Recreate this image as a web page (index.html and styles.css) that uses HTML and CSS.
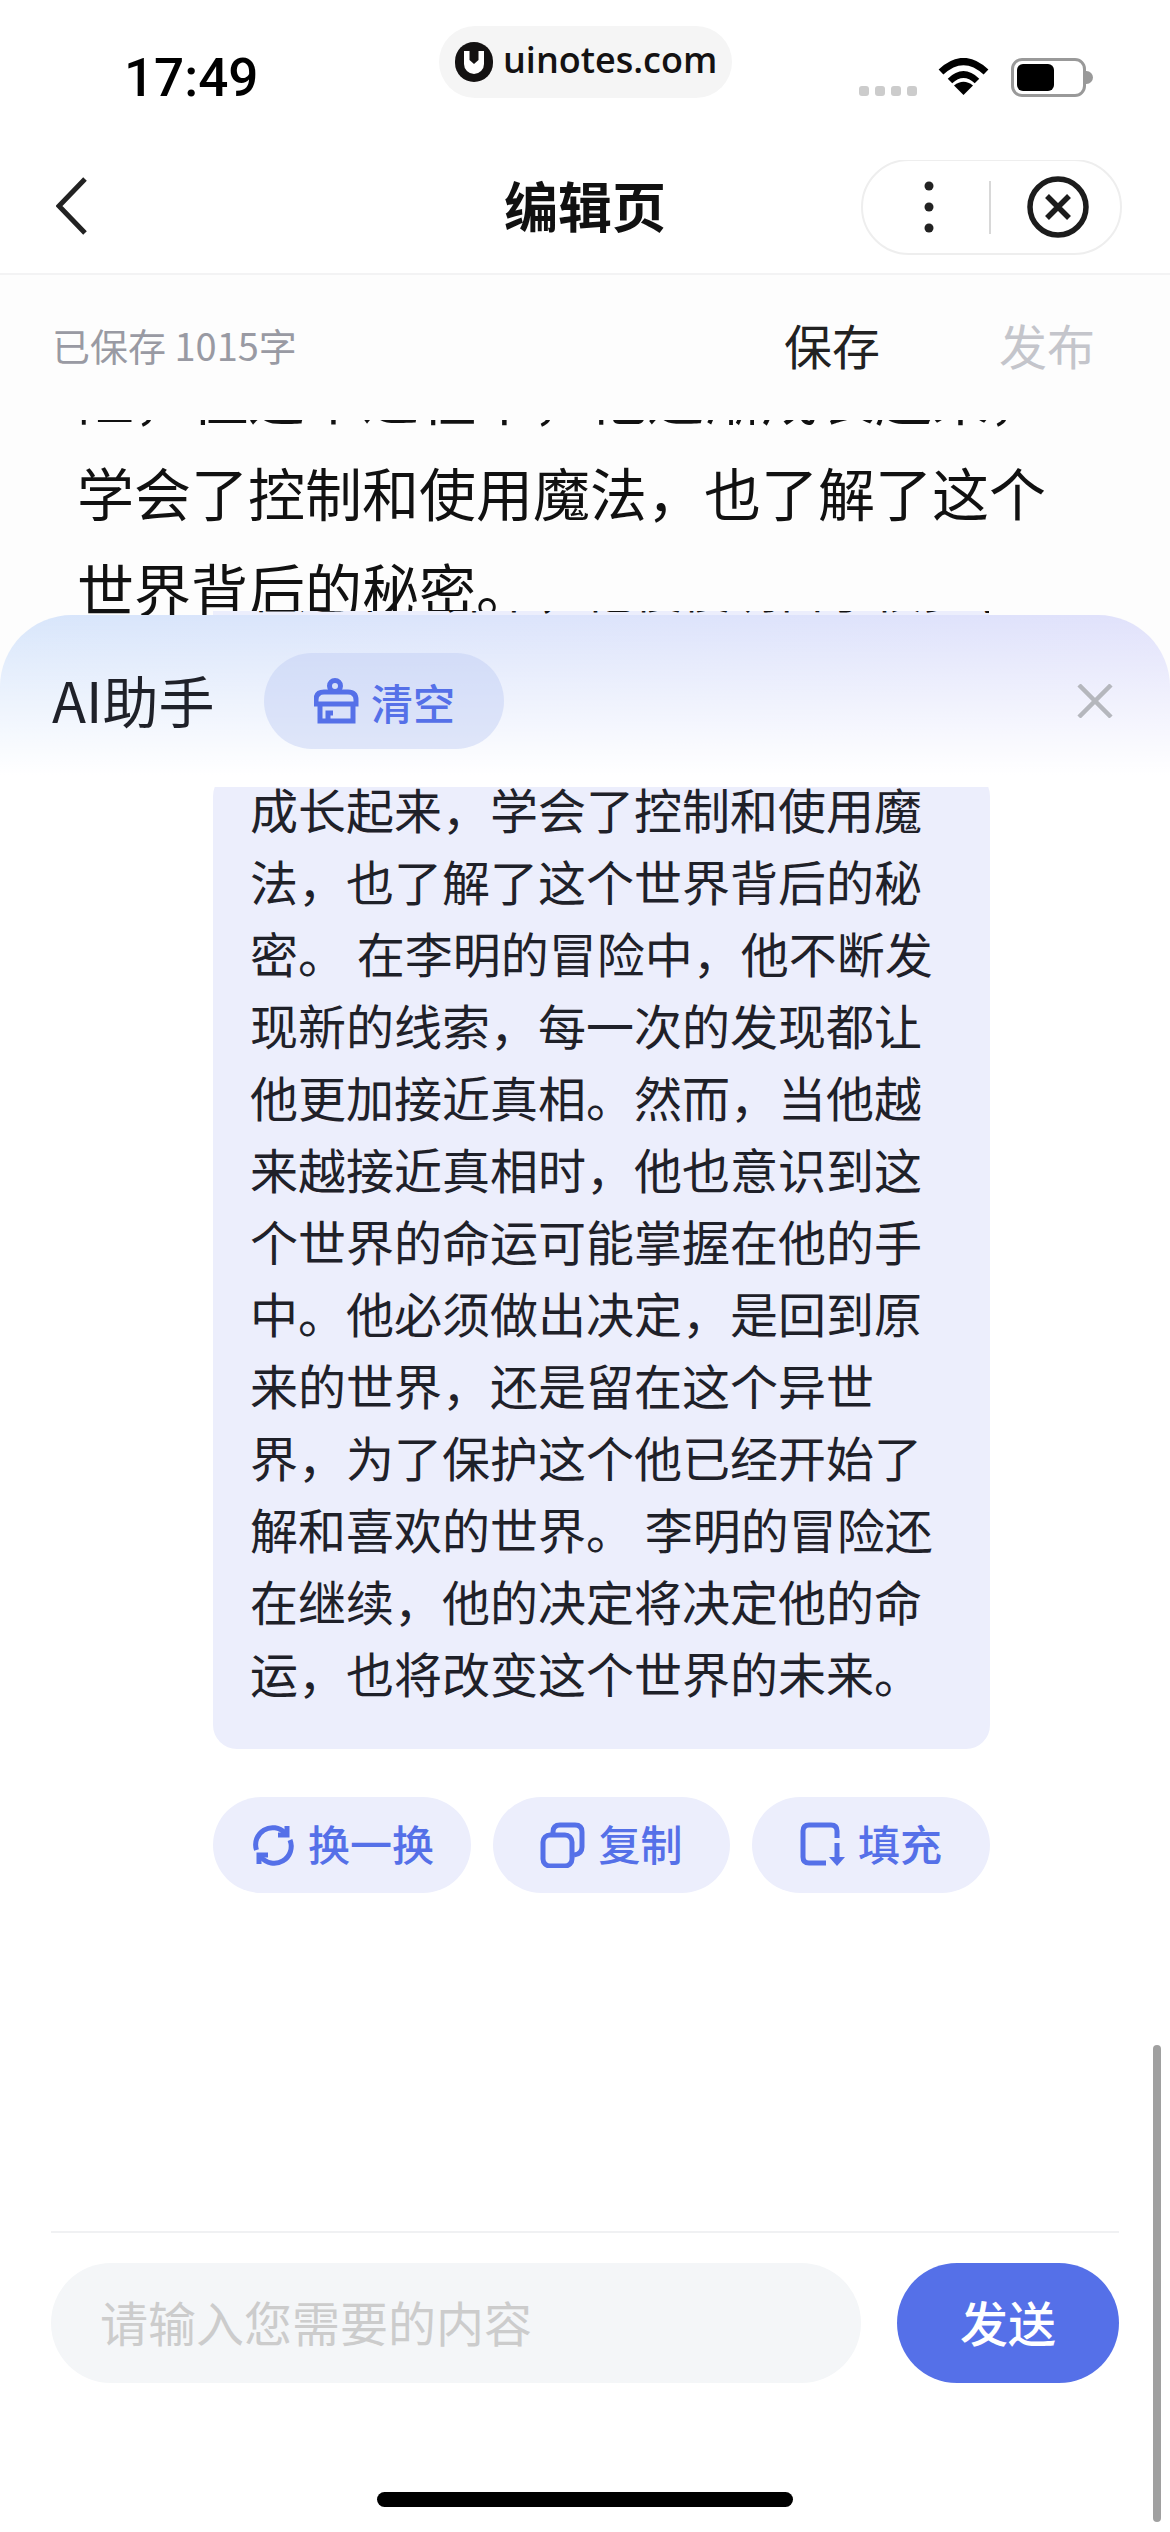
FILE: index.html
```html
<!DOCTYPE html>
<html lang="zh-CN">
<head>
    <meta charset="UTF-8">
    <meta name="viewport" content="width=device-width, initial-scale=1.0">
    <title>编辑页</title>
    <link rel="stylesheet" href="styles.css">
</head>
<body>

    <div class="status">
        <span class="time">17:49</span>
        <div class="pill">
            <svg class="logo" width="38" height="40" viewBox="0 0 38 40">
                <rect width="38" height="40" rx="19" fill="#141212"/>
                <path d="M9 9h20v13a10 10 0 0 1-20 0z" fill="#fff"/>
                <path d="M14.5 5h9v13l-4.500 4-4.500-4z" fill="#141212"/>
            </svg>
            <span class="site">uinotes.com</span>
        </div>
        <div class="indicators">
            <div class="cell"><i></i><i></i><i></i><i></i></div>
            <svg width="51" height="37" viewBox="0 0 51 37">
                <path d="M3 14Q25.500-7 48 14" fill="none" stroke="#000" stroke-width="7"/>
                <path d="M12 23Q25.500 10 39 23" fill="none" stroke="#000" stroke-width="6.500"/>
                <path d="M25.500 37L16 27.500Q25.500 20 35 27.500z"/>
            </svg>
            <div class="battery"><div class="battery-level"></div></div>
            <div class="battery-nub"></div>
        </div>
    </div>

    <nav class="nav">
        <svg class="back" width="32" height="58" viewBox="0 0 32 58">
            <path d="M29 2L3 29l26 27" fill="none" stroke="#222" stroke-width="5"/>
        </svg>
        <h1 class="title">编辑页</h1>
        <div class="capsule">
            <svg class="cap-menu" width="10" height="52" viewBox="0 0 10 52">
                <circle cx="5" cy="5" r="4.500" fill="#222"/>
                <circle cx="5" cy="26" r="4.500" fill="#222"/>
                <circle cx="5" cy="47" r="4.500" fill="#222"/>
            </svg>
            <div class="cap-line"></div>
            <svg class="cap-close" width="62" height="62" viewBox="0 0 62 62">
                <circle cx="31" cy="31" r="28" fill="none" stroke="#1c1c1c" stroke-width="5.500"/>
                <path d="M20 20l22 22M42 20L20 42" fill="none" stroke="#1c1c1c" stroke-width="5.500"/>
            </svg>
        </div>
    </nav>

    <div class="toolbar">
        <span class="saved">已保存 1015字</span>
        <span class="tool-save">保存</span>
        <span class="tool-publish">发布</span>
    </div>

    <div class="article">
        <p>险&#xFF0C;但这个过程中&#xFF0C;他逐渐成长起来&#xFF0C;学会了控制和使用魔法&#xFF0C;也了解了这个世界背后的秘密。</p>
        <div class="peek"><p>在这个世界中&#xFF0C;他慢慢明白了很多事情</p></div>
    </div>

    <div class="sheet">
        <div class="sheet-head">
            <span class="sheet-title">AI助手</span>
            <div class="chip">
                <svg width="46" height="46" viewBox="0 0 46 46" fill="none" stroke="#5570e8" stroke-width="5">
                    <circle cx="21" cy="8" r="5.500"/>
                    <path d="M2 26v-4q0-8 8-8h24q8 0 8 8v4z"/>
                    <path d="M6 26v17h33V26M14 43v-8h5"/>
                </svg>
                清空
            </div>
            <svg class="sheet-close" width="36" height="34" viewBox="0 0 36 34">
                <path d="M2 1l32 32M34 1L2 33" fill="none" stroke="#b5b7bd" stroke-width="4.500"/>
            </svg>
        </div>

        <div class="chat">
            <div class="bubble">成长起来&#xFF0C;学会了控制和使用魔法&#xFF0C;也了解了这个世界背后的秘密。 在李明的冒险中&#xFF0C;他不断发现新的线索&#xFF0C;每一次的发现都让他更加接近真相。然而&#xFF0C;当他越来越接近真相时&#xFF0C;他也意识到这个世界的命运可能掌握在他的手中。他必须做出决定&#xFF0C;是回到原来的世界&#xFF0C;还是留在这个异世界&#xFF0C;为了保护这个他已经开始了解和喜欢的世界。 李明的冒险还在继续&#xFF0C;他的决定将决定他的命运&#xFF0C;也将改变这个世界的未来。</div>
            <div class="actions">
                <div class="action">
                    <svg width="46" height="46" viewBox="-3 -3 46 46" fill="none" stroke="#5570e8" stroke-width="5">
                        <path d="M32 8A17 17 0 0 0 3.500 25"/>
                        <path d="M34 1v9h-9"/>
                        <path d="M37 15A17 17 0 0 1 8 32"/>
                        <path d="M6 39v-9h9"/>
                    </svg>
                    <span>换一换</span>
                </div>
                <div class="action">
                    <svg width="46" height="46" viewBox="0 0 46 46" fill="none" stroke="#5570e8" stroke-width="5">
                        <rect x="3" y="13" width="29" height="31" rx="7"/>
                        <path d="M13 12V10q0-7 7-7h15q7 0 7 7v15q0 7-8 8"/>
                    </svg>
                    <span>复制</span>
                </div>
                <div class="action">
                    <svg width="46" height="46" viewBox="0 0 46 46" fill="none" stroke="#5570e8" stroke-width="5">
                        <path d="M37 16V9q0-6-6-6H9Q3 3 3 9v26q0 6 6 6h17"/>
                        <path d="M37 21v16"/>
                        <path d="M29 35h16l-8 9z" fill="#5570e8" stroke="none"/>
                    </svg>
                    <span>填充</span>
                </div>
            </div>
        </div>

        <div class="composer">
            <input class="composer-input" type="text" placeholder="请输入您需要的内容">
            <button class="send">发送</button>
        </div>
        <div class="home-bar"></div>
    </div>

    <div class="scrollbar"></div>

</body>
</html>
```

FILE: styles.css
```css
body {
    font-family: "Noto Sans CJK SC", sans-serif;
    margin: 0;
    width: 1170px;
    height: 2532px;
    overflow: hidden;
    position: relative;
    background-color: #fdfdfd;
    color: #1f2129;
}
p, h1 {
    margin: 0;
}

/* status bar */
.status {
    height: 160px;
    background-color: #fff;
    position: relative;
    display: flex;
    align-items: flex-start;
    justify-content: space-between;
    padding-left: 124px;
    padding-right: 77px;
    box-sizing: border-box;
}
.time {
    font-family: Roboto, sans-serif;
    font-weight: 500;
    font-size: 53px;
    line-height: 60px;
    margin-top: 48px;
    color: #000;
}
.pill {
    position: absolute;
    left: 439px;
    top: 26px;
    width: 293px;
    height: 72px;
    box-sizing: border-box;
    padding-left: 16px;
    display: flex;
    align-items: center;
    background-color: #f5f5f5;
    border-radius: 36px;
}
.logo {
    margin-right: 10px;
}
.site {
    font-family: "Open Sans", sans-serif;
    font-weight: 600;
    font-size: 36px;
    color: #141212;
    margin-top: -6px;
}
.indicators {
    display: flex;
    align-items: flex-start;
    margin-top: 58px;
}
.cell {
    display: flex;
    gap: 6px;
    margin-top: 28px;
    margin-right: 21px;
}
.cell i {
    width: 10px;
    height: 10px;
    border-radius: 3px;
    background-color: #ccc;
}
.battery {
    width: 75px;
    height: 39px;
    box-sizing: border-box;
    border: 3px solid #999;
    border-radius: 11px;
    margin-left: 22px;
    padding: 3px;
}
.battery-level {
    width: 37px;
    height: 27px;
    background-color: #000;
    border-radius: 6px;
}
.battery-nub {
    width: 7px;
    height: 13px;
    margin-top: 13px;
    background-color: #999;
    border-radius: 0 7px 7px 0;
}

/* nav bar */
.nav {
    height: 115px;
    box-sizing: border-box;
    background-color: #fff;
    border-bottom: 2px solid #f3f3f4;
    display: grid;
    grid-template-columns: 1fr auto 1fr;
    align-items: start;
    padding: 0 48px;
}
.back {
    margin-left: 8px;
    margin-top: 17px;
}
.title {
    font-size: 54px;
    font-weight: 700;
    line-height: 90px;
    color: #111;
}
.capsule {
    justify-self: end;
    width: 261px;
    height: 96px;
    margin-top: -1px;
    box-sizing: border-box;
    border: 2px solid #eee;
    border-radius: 48px;
    display: flex;
    align-items: center;
}
.cap-menu {
    margin-left: 61px;
}
.cap-line {
    width: 2px;
    height: 53px;
    background-color: #d8d8d8;
    margin-left: 55px;
}
.cap-close {
    margin-left: 36px;
}

/* save bar */
.toolbar {
    height: 145px;
    box-sizing: border-box;
    display: flex;
    align-items: center;
    padding: 0 75px 8px 52px;
}
.saved {
    font-size: 38px;
    color: #999aa3;
    margin-right: auto;
    margin-top: 2px;
}
.tool-save {
    font-size: 48px;
    color: #222;
}
.tool-publish {
    font-size: 48px;
    color: #c4c5cb;
    margin-left: 119px;
}

/* document text behind the sheet */
.article {
    height: 195px;
    position: relative;
    overflow: hidden;
    padding: 0 90px 0 77px;
    font-size: 57px;
    line-height: 96px;
    color: #111;
}
.article > p {
    margin-top: -73px;
}
.peek {
    position: absolute;
    left: 213px;
    bottom: 0;
    width: 776px;
    height: 4px;
    overflow: hidden;
    background-color: #eceefc;
    font-size: 48px;
    line-height: 72px;
    white-space: nowrap;
    padding-left: 37px;
    box-sizing: border-box;
}
.peek p {
    margin-top: -60px;
}

/* AI sheet */
.sheet {
    height: 1917px;
    border-radius: 72px 72px 0 0;
    background:
        linear-gradient(to bottom, rgba(255, 255, 255, 0) 0, #fff 160px),
        linear-gradient(100deg, #d8e6fb, #e3e0fb);
    overflow: hidden;
}
.sheet-head {
    height: 172px;
    display: flex;
    align-items: center;
    padding: 0 57px 0 52px;
    box-sizing: border-box;
}
.sheet-title {
    font-size: 56px;
    margin-right: 50px;
    margin-bottom: 6px;
}
.chip {
    width: 240px;
    height: 96px;
    border-radius: 48px;
    background-color: rgba(190, 205, 245, 0.45);
    color: #5570e8;
    font-size: 42px;
    font-weight: 500;
    display: flex;
    align-items: center;
    justify-content: center;
    gap: 11px;
}
.sheet-close {
    margin-left: auto;
}
.chat {
    height: 1446px;
    overflow: hidden;
    border-bottom: 2px solid #f0f1f3;
    margin: 0 51px;
    padding-left: 162px;
    padding-right: 129px;
    box-sizing: border-box;
}
.bubble {
    margin-top: -15px;
    padding: 0 37px 41px;
    background-color: #eceefc;
    border-radius: 24px;
    font-size: 48px;
    line-height: 72px;
    color: #1f2129;
}
.actions {
    display: grid;
    grid-template-columns: 258px 237px 238px;
    gap: 22px;
    margin-top: 48px;
}
.action {
    height: 96px;
    border-radius: 48px;
    background-color: #eceefc;
    color: #5570e8;
    font-size: 42px;
    font-weight: 500;
    display: flex;
    align-items: center;
    justify-content: center;
    gap: 12px;
}
.action span {
    margin-bottom: 6px;
}
.composer {
    display: flex;
    gap: 36px;
    padding: 30px 51px 0;
}
.composer-input {
    flex: 1;
    min-width: 0;
    height: 120px;
    box-sizing: border-box;
    border: none;
    border-radius: 60px;
    background-color: #f4f6f8;
    padding: 0 49px 5px;
    font-family: inherit;
    font-size: 48px;
}
.composer-input::placeholder {
    color: #ccc;
}
.send {
    width: 222px;
    height: 120px;
    border: none;
    border-radius: 60px;
    background-color: #5570e8;
    color: #fff;
    font-family: inherit;
    font-size: 48px;
    font-weight: 500;
    padding: 0 0 5px;
}
.home-bar {
    width: 416px;
    height: 15px;
    margin: 109px auto 0;
    background-color: #000;
    border-radius: 8px;
}
.scrollbar {
    position: absolute;
    left: 1153px;
    top: 2045px;
    width: 8px;
    height: 477px;
    border-radius: 4px;
    background-color: #a0a0a0;
}
```
